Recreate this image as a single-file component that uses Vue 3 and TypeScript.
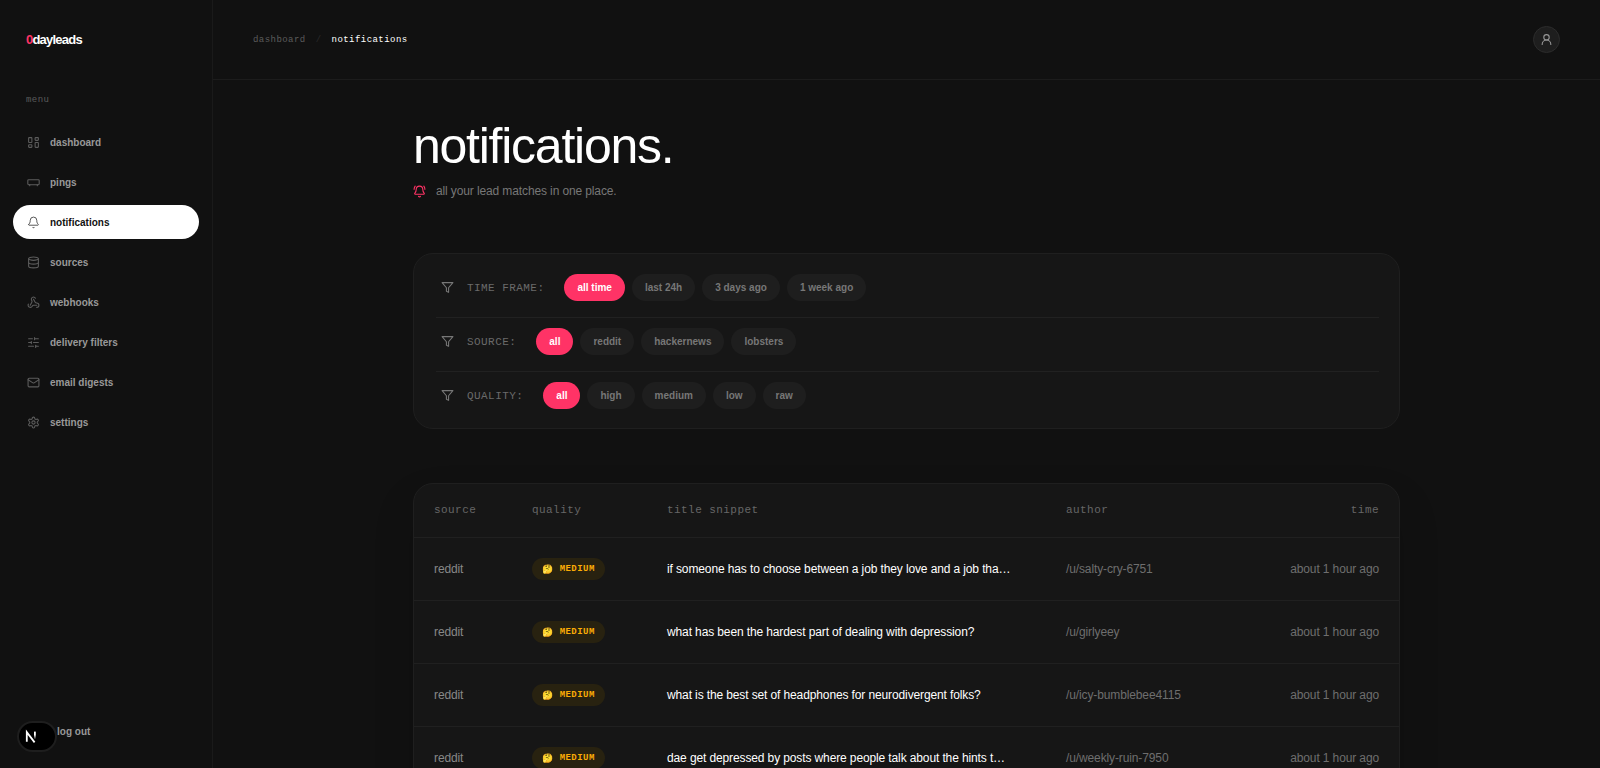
<script setup lang="ts">
import { ref } from 'vue'

interface NavItem {
  label: string
  paths: string[]
}

interface FilterGroup {
  name: string
  options: string[]
}

interface Lead {
  source: string
  quality: string
  title: string
  author: string
  time: string
}

const navItems: NavItem[] = [
  {
    label: 'dashboard',
    paths: [
      'M4 3h4a1 1 0 0 1 1 1v7a1 1 0 0 1-1 1H4a1 1 0 0 1-1-1V4a1 1 0 0 1 1-1z',
      'M16 3h4a1 1 0 0 1 1 1v3a1 1 0 0 1-1 1h-4a1 1 0 0 1-1-1V4a1 1 0 0 1 1-1z',
      'M16 12h4a1 1 0 0 1 1 1v7a1 1 0 0 1-1 1h-4a1 1 0 0 1-1-1v-7a1 1 0 0 1 1-1z',
      'M4 16h4a1 1 0 0 1 1 1v3a1 1 0 0 1-1 1H4a1 1 0 0 1-1-1v-3a1 1 0 0 1 1-1z',
    ],
  },
  {
    label: 'pings',
    paths: [
      'M3 7h18a1.500 1.500 0 0 1 1.500 1.500v6a1.500 1.500 0 0 1-1.500 1.500H3a1.500 1.500 0 0 1-1.500-1.500v-6A1.500 1.500 0 0 1 3 7z',
      'M5 16v2',
      'M19 16v2',
    ],
  },
  {
    label: 'notifications',
    paths: [
      'M10.268 21a2 2 0 0 0 3.464 0',
      'M3.262 15.326A1 1 0 0 0 4 17h16a1 1 0 0 0 .74-1.673C19.410 13.956 18 12.499 18 8A6 6 0 0 0 6 8c0 4.499-1.411 5.956-2.738 7.326',
    ],
  },
  {
    label: 'sources',
    paths: [
      'M3 5a9 3 0 1 0 18 0a9 3 0 1 0-18 0',
      'M3 5v14a9 3 0 0 0 18 0V5',
      'M3 12a9 3 0 0 0 18 0',
    ],
  },
  {
    label: 'webhooks',
    paths: [
      'M18 16.980h-5.990c-1.100 0-1.950.940-2.480 1.900A4 4 0 0 1 2 17c.010-.700.200-1.400.570-2',
      'm6 17 3.130-5.780c.530-.970.100-2.180-.500-3.100a4 4 0 1 1 6.890-4.060',
      'm12 6 3.130 5.730C15.660 12.700 16.900 13 18 13a4 4 0 0 1 0 8',
    ],
  },
  {
    label: 'delivery filters',
    paths: ['M10 5H3', 'M12 19H3', 'M14 3v4', 'M16 17v4', 'M21 12h-9', 'M21 19h-5', 'M21 5h-7', 'M8 10v4', 'M8 12H3'],
  },
  {
    label: 'email digests',
    paths: [
      'M4 4h16a2 2 0 0 1 2 2v12a2 2 0 0 1-2 2H4a2 2 0 0 1-2-2V6a2 2 0 0 1 2-2z',
      'm22 7-8.990 5.700a2 2 0 0 1-2.020 0L2 7',
    ],
  },
  {
    label: 'settings',
    paths: [
      'M12.220 2h-.440a2 2 0 0 0-2 2v.180a2 2 0 0 1-1 1.730l-.430.250a2 2 0 0 1-2 0l-.150-.080a2 2 0 0 0-2.730.730l-.220.380a2 2 0 0 0 .730 2.730l.150.100a2 2 0 0 1 1 1.720v.510a2 2 0 0 1-1 1.740l-.150.090a2 2 0 0 0-.730 2.730l.220.380a2 2 0 0 0 2.730.730l.150-.080a2 2 0 0 1 2 0l.430.250a2 2 0 0 1 1 1.730V20a2 2 0 0 0 2 2h.440a2 2 0 0 0 2-2v-.180a2 2 0 0 1 1-1.730l.430-.250a2 2 0 0 1 2 0l.150.080a2 2 0 0 0 2.730-.730l.220-.390a2 2 0 0 0-.730-2.730l-.150-.080a2 2 0 0 1-1-1.740v-.500a2 2 0 0 1 1-1.740l.150-.090a2 2 0 0 0 .730-2.730l-.220-.380a2 2 0 0 0-2.730-.730l-.150.080a2 2 0 0 1-2 0l-.430-.250a2 2 0 0 1-1-1.730V4a2 2 0 0 0-2-2z',
      'M9 12a3 3 0 1 0 6 0a3 3 0 1 0-6 0',
    ],
  },
]

const filterGroups: FilterGroup[] = [
  { name: 'time frame:', options: ['all time', 'last 24h', '3 days ago', '1 week ago'] },
  { name: 'source:', options: ['all', 'reddit', 'hackernews', 'lobsters'] },
  { name: 'quality:', options: ['all', 'high', 'medium', 'low', 'raw'] },
]

const leads: Lead[] = [
  { source: 'reddit', quality: 'medium', title: 'if someone has to choose between a job they love and a job tha…', author: '/u/salty-cry-6751', time: 'about 1 hour ago' },
  { source: 'reddit', quality: 'medium', title: 'what has been the hardest part of dealing with depression?', author: '/u/girlyeey', time: 'about 1 hour ago' },
  { source: 'reddit', quality: 'medium', title: 'what is the best set of headphones for neurodivergent folks?', author: '/u/icy-bumblebee4115', time: 'about 1 hour ago' },
  { source: 'reddit', quality: 'medium', title: 'dae get depressed by posts where people talk about the hints t…', author: '/u/weekly-ruin-7950', time: 'about 1 hour ago' },
]

const activeNav = ref('notifications')
const selected = ref<string[]>(filterGroups.map((group) => group.options[0]))
</script>

<template>
  <div class="shell">
    <aside class="sidebar">
      <a class="logo" href="#"><span class="logo-zero">0</span>dayleads</a>
      <p class="menu-label">menu</p>
      <nav class="nav">
        <a
          v-for="item in navItems"
          :key="item.label"
          href="#"
          class="nav-item"
          :class="{ active: item.label === activeNav }"
          @click.prevent="activeNav = item.label"
        >
          <svg class="icon" viewBox="0 0 24 24" aria-hidden="true">
            <path v-for="d in item.paths" :key="d" :d="d" />
          </svg>
          <span>{{ item.label }}</span>
        </a>
      </nav>
      <button class="logout" type="button">log out</button>
    </aside>

    <div class="main">
      <header class="topbar">
        <nav class="crumbs" aria-label="Breadcrumb">
          <a href="#">dashboard</a>
          <span class="slash">/</span>
          <span class="current">notifications</span>
        </nav>
        <button class="avatar" type="button" aria-label="Account">
          <svg class="icon" viewBox="0 0 24 24" aria-hidden="true">
            <circle cx="12" cy="8" r="5" />
            <path d="M20 21a8 8 0 0 0-16 0" />
          </svg>
        </button>
      </header>

      <main class="content">
        <h1>notifications.</h1>
        <p class="subtitle">
          <svg class="icon" viewBox="0 0 24 24" aria-hidden="true">
            <path d="M10.268 21a2 2 0 0 0 3.464 0" />
            <path d="M22 8c0-2.300-.800-4.300-2-6" />
            <path d="M3.262 15.326A1 1 0 0 0 4 17h16a1 1 0 0 0 .74-1.673C19.410 13.956 18 12.499 18 8A6 6 0 0 0 6 8c0 4.499-1.411 5.956-2.738 7.326" />
            <path d="M4 2C2.800 3.700 2 5.700 2 8" />
          </svg>
          <span>all your lead matches in one place.</span>
        </p>

        <section class="card filters">
          <div v-for="(group, index) in filterGroups" :key="group.name" class="filter-row" role="group" :aria-label="group.name">
            <svg class="icon" viewBox="0 0 24 24" aria-hidden="true">
              <path d="M22 3H2l8 9.460V19l4 2v-8.540L22 3z" />
            </svg>
            <span class="filter-name">{{ group.name }}</span>
            <div class="pills">
              <button
                v-for="option in group.options"
                :key="option"
                type="button"
                class="pill"
                :class="{ on: selected[index] === option }"
                :aria-pressed="selected[index] === option"
                @click="selected[index] = option"
              >{{ option }}</button>
            </div>
          </div>
        </section>

        <section class="card leads">
          <table>
            <thead>
              <tr>
                <th class="col-source" scope="col">source</th>
                <th class="col-quality" scope="col">quality</th>
                <th class="col-title" scope="col">title snippet</th>
                <th class="col-author" scope="col">author</th>
                <th class="col-time" scope="col">time</th>
              </tr>
            </thead>
            <tbody>
              <tr v-for="lead in leads" :key="lead.author">
                <td class="col-source">{{ lead.source }}</td>
                <td><span class="badge"><span class="emoji">🤔</span>{{ lead.quality }}</span></td>
                <td class="title">{{ lead.title }}</td>
                <td>{{ lead.author }}</td>
                <td class="col-time">{{ lead.time }}</td>
              </tr>
            </tbody>
          </table>
        </section>
      </main>
    </div>

    <button class="dev-badge" type="button" aria-label="Developer tools">
      <svg viewBox="0 0 40 40" aria-hidden="true">
        <defs>
          <linearGradient id="stem" x1="0" y1="0" x2="0" y2="1">
            <stop offset="0.400" stop-color="#fff" />
            <stop offset="1" stop-color="#fff" stop-opacity="0" />
          </linearGradient>
        </defs>
        <path d="M13 28V12L26 29" fill="none" stroke="#fff" stroke-width="3" />
        <rect x="25" y="11" width="3" height="13" fill="url(#stem)" />
      </svg>
    </button>
  </div>
</template>

<style>
body {
  margin: 0;
  background: #111111;
}
</style>

<style scoped>
.shell {
  display: flex;
  height: 100vh;
  overflow: hidden;
  background: #111111;
  color: #ffffff;
  font-family: "Liberation Sans", Arial, sans-serif;
  font-size: 12px;
  letter-spacing: -0.01em;
}

.shell * {
  box-sizing: border-box;
}

a {
  color: inherit;
  text-decoration: none;
}

button {
  margin: 0;
  border: 0;
  font-family: inherit;
  cursor: pointer;
}

.icon {
  flex: none;
  width: 13px;
  height: 13px;
  fill: none;
  stroke: currentColor;
  stroke-width: 2;
  stroke-linecap: round;
  stroke-linejoin: round;
}

.sidebar {
  display: flex;
  flex: none;
  flex-direction: column;
  width: 213px;
  padding: 0 13px 26px;
  border-right: 1px solid #1a1a1a;
}

.logo {
  padding: 32px 13px 0;
  font-size: 13px;
  font-weight: 700;
  line-height: 16px;
  letter-spacing: -0.06em;
}

.logo-zero {
  color: #ff3366;
}

.menu-label {
  margin: 46px 0 0;
  padding: 0 13px;
  color: #5c5c5c;
  font-family: "Liberation Mono", monospace;
  font-size: 9px;
  line-height: 12px;
  letter-spacing: 0.05em;
}

.nav {
  display: flex;
  flex-direction: column;
  gap: 6px;
  margin-top: 19px;
}

.nav-item {
  display: flex;
  align-items: center;
  gap: 10px;
  height: 34px;
  padding: 0 14px;
  border-radius: 17px;
  color: #999999;
  font-size: 10px;
  font-weight: 700;
  letter-spacing: 0;
}

.nav-item .icon {
  color: #5c5c5c;
}

.nav-item.active {
  background: #ffffff;
  color: #111111;
}

.nav-item.active .icon {
  color: #333333;
  stroke-width: 1.5;
}

.logout {
  align-self: flex-start;
  margin-top: auto;
  padding: 0 0 0 44px;
  background: none;
  color: #999999;
  font-size: 10px;
  font-weight: 700;
  line-height: 20px;
}

.main {
  flex: 1;
  min-width: 0;
}

.topbar {
  display: flex;
  align-items: center;
  justify-content: space-between;
  height: 80px;
  padding: 0 40px;
  border-bottom: 1px solid #1c1c1c;
}

.crumbs {
  display: flex;
  gap: 10px;
  color: #5c5c5c;
  font-family: "Liberation Mono", monospace;
  font-size: 9px;
  letter-spacing: 0.05em;
}

.slash {
  color: #2a2a2a;
}

.current {
  color: #ffffff;
}

.avatar {
  display: flex;
  align-items: center;
  justify-content: center;
  width: 27px;
  height: 27px;
  padding: 0;
  border: 1px solid #2c2c2c;
  border-radius: 50%;
  background: #1e1e1e;
  color: #999999;
}

.content {
  max-width: 987px;
  margin: 0 auto;
  padding-top: 40px;
}

h1 {
  margin: 0;
  font-size: 50px;
  font-weight: 400;
  line-height: 52px;
  letter-spacing: -0.025em;
}

.subtitle {
  display: flex;
  align-items: center;
  gap: 10px;
  margin: 10px 0 0;
  color: #777777;
  line-height: 18px;
}

.subtitle .icon {
  color: #ff3366;
}

.card {
  border: 1px solid #1f1f1f;
  border-radius: 20px;
  background: #161616;
}

.filters {
  margin-top: 53px;
  padding: 20px 20px 19px 22px;
}

.filter-row {
  display: flex;
  align-items: center;
  padding: 10px 0 16px 5px;
  border-bottom: 1px solid #212121;
}

.filter-row:first-child {
  padding-top: 0;
}

.filter-row:last-child {
  padding-bottom: 0;
  border-bottom: 0;
}

.filter-row .icon {
  color: #777777;
}

.filter-name {
  margin-left: 13px;
  color: #6a6a6a;
  font-family: "Liberation Mono", monospace;
  font-size: 11px;
  letter-spacing: 0.04em;
  text-transform: uppercase;
}

.pills {
  display: flex;
  gap: 7px;
  margin-left: 20px;
}

.pill {
  height: 27px;
  padding: 0 13px;
  border-radius: 14px;
  background: #1e1e1e;
  color: #777777;
  font-size: 10px;
  font-weight: 700;
  letter-spacing: 0;
}

.pill.on {
  background: #ff3366;
  color: #ffffff;
}

.leads {
  margin-top: 54px;
  overflow: hidden;
}

.leads.card {
  box-shadow: 0 20px 40px rgba(0, 0, 0, 0.15);
}

table {
  width: 100%;
  border-collapse: collapse;
  table-layout: fixed;
}

th {
  height: 53px;
  padding: 0 20px;
  border-bottom: 1px solid #202020;
  color: #666666;
  font-family: "Liberation Mono", monospace;
  font-size: 11px;
  font-weight: 400;
  letter-spacing: 0.04em;
  text-align: left;
}

td {
  height: 63px;
  padding: 0 20px;
  border-bottom: 1px solid #202020;
  color: #6e6e6e;
  white-space: nowrap;
}

.col-source {
  width: 98px;
}

td.col-source {
  color: #888888;
}

.col-quality {
  width: 135px;
}

.col-author {
  width: 180px;
}

.col-title {
  width: 399px;
}

.col-time {
  text-align: right;
}

td.title {
  color: #ffffff;
}

.badge {
  display: inline-flex;
  align-items: center;
  gap: 6px;
  height: 22px;
  padding: 0 10px;
  border-radius: 11px;
  background: #282210;
  color: #fcac05;
  font-family: "Liberation Mono", monospace;
  font-size: 9px;
  font-weight: 700;
  letter-spacing: 0.05em;
  text-transform: uppercase;
}

.emoji {
  font-family: "Noto Color Emoji", sans-serif;
}

.dev-badge {
  position: fixed;
  bottom: 16px;
  left: 17px;
  width: 40px;
  height: 31px;
  padding: 0;
  border: 2px solid #1e1e1e;
  border-radius: 16px;
  background: #000000;
}

.dev-badge svg {
  display: block;
  width: 24px;
  height: 24px;
}
</style>
